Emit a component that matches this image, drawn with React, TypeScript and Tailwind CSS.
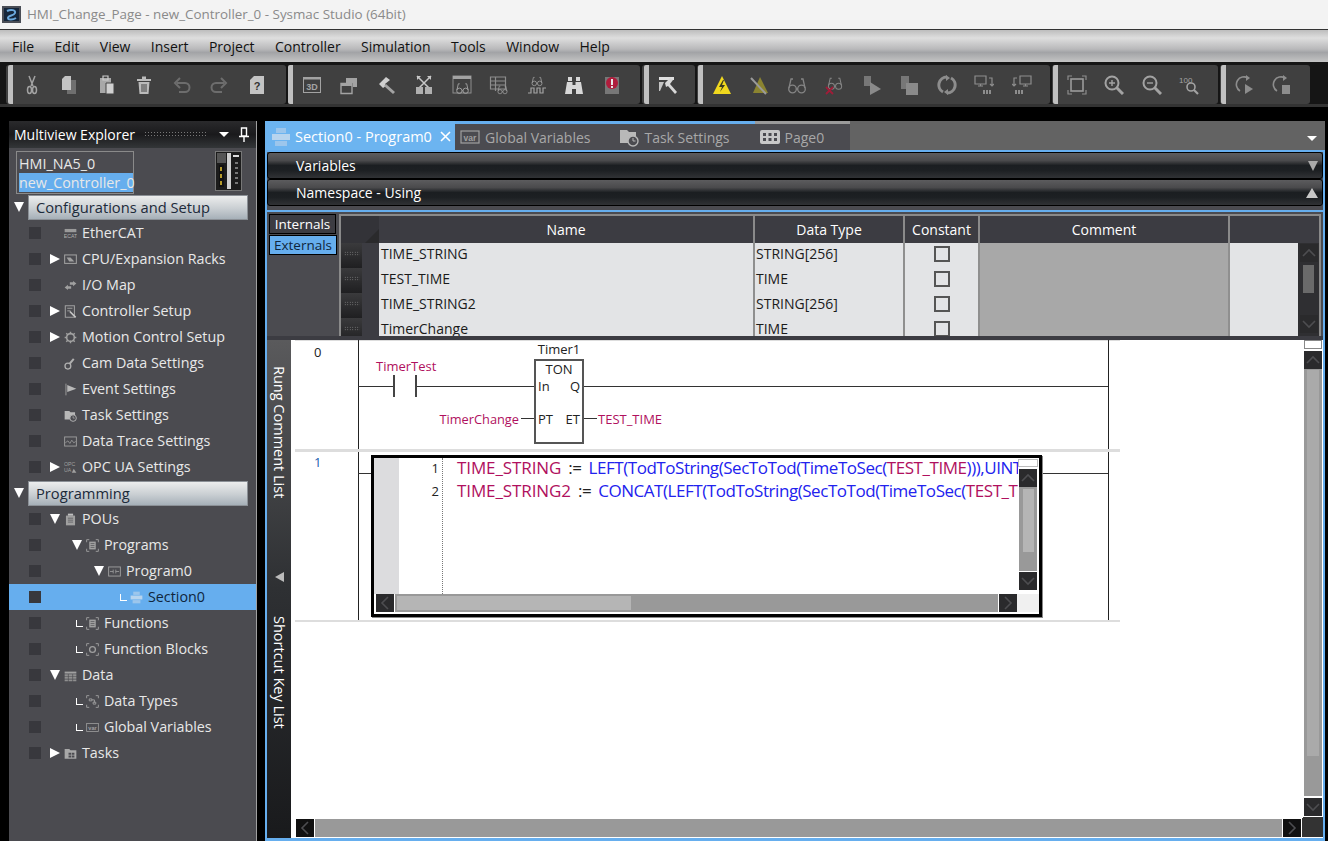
import type { ReactNode } from "react"

const FONT = "font-['Open_Sans','Liberation_Sans',sans-serif]"

function Ico({ children, size = 20 }: { children: ReactNode; size?: number }) {
  return (
    <svg width={size} height={size} viewBox="0 0 20 20" fill="#a3a3a3" stroke="none">
      {children}
    </svg>
  )
}

const line = { fill: "none", stroke: "#a3a3a3", strokeWidth: 1.5 }
const thin = { fill: "none", stroke: "#8d8d8d", strokeWidth: 1.2 }

function Glasses({ color = "#858585" }: { color?: string }) {
  return (
    <g fill="none" stroke={color} strokeWidth="1.3">
      <circle cx="5.5" cy="14" r="3.8" />
      <circle cx="14.5" cy="14" r="3.8" />
      <path d="M9.3 14h1.4M2 13l2-9h2M18 13l-2-9h-2" />
    </g>
  )
}

const TOOLBAR_ICONS: Record<string, ReactNode> = {
  cut: (
    <>
      <path d="M7 1l4 10M13 1L9 11" {...line} />
      <ellipse cx="7.5" cy="15" rx="2" ry="3.5" {...line} />
      <ellipse cx="12.5" cy="15" rx="2" ry="3.5" {...line} />
    </>
  ),
  copy: (
    <>
      <path d="M8 5h9v14H8z" fill="#6f6f6f" />
      <path d="M6 1h6v14H3V4z" fill="#c4c4c4" />
    </>
  ),
  paste: (
    <>
      <path d="M3 3h11v15H3z" fill="#a8a8a8" />
      <path d="M6 1h5v4H6z" fill="none" stroke="#ccc" strokeWidth="1.2" />
      <path d="M9 8h8v11H9z" fill="#d0d0d0" stroke="#444" />
    </>
  ),
  trash: (
    <>
      <path d="M3 4h14v2H3zM8 1.5h4V4H8z" fill="#bbb" />
      <path d="M4.5 7h11l-1 12h-9z" fill="#bbb" />
      <path d="M8 9v8M10 9v8M12 9v8" stroke="#444" strokeWidth="1" />
    </>
  ),
  undo: <path d="M5 8h8a4 4 0 0 1 0 9H7M8 3L3 8l5 5" fill="none" stroke="#6d6d6d" strokeWidth="2" />,
  redo: <path d="M15 8H7a4 4 0 0 0 0 9h6M12 3l5 5-5 5" fill="none" stroke="#6d6d6d" strokeWidth="2" />,
  help: (
    <>
      <path d="M7 1h10v18H3V5z" fill="#c4c4c4" />
      <text x="10" y="15" fontSize="11" fontWeight="700" textAnchor="middle" fill="#333" fontFamily="Liberation Sans">?</text>
    </>
  ),
  d3: (
    <>
      <rect x="1.5" y="2.5" width="17" height="15" fill="none" stroke="#a3a3a3" strokeWidth="1" />
      <rect x="1.5" y="2.5" width="17" height="2" fill="#a3a3a3" />
      <text x="10" y="14.5" fontSize="9" fontWeight="700" textAnchor="middle" fill="#a3a3a3" fontFamily="Liberation Sans">3D</text>
    </>
  ),
  windows: (
    <>
      <path d="M7 3h11v9h-4V8H7z" fill="#a3a3a3" />
      <path d="M2 8.5h11v10H2z" fill="none" stroke="#a3a3a3" strokeWidth="1.4" />
      <path d="M2 8h11v3H2z" fill="#a3a3a3" />
    </>
  ),
  hammer: (
    <>
      <path d="M2 9l7-7 4 3-5 4 1 2-3 2z" fill="#cfcfcf" />
      <path d="M9 9l9 8-2 2-9-8z" fill="#a3a3a3" />
    </>
  ),
  cross: (
    <>
      <path d="M3 1l14 14M17 1L3 15" fill="none" stroke="#c8c8c8" strokeWidth="1.5" />
      <path d="M3 1h4L3 5zM17 1h-4l4 4z" fill="#c8c8c8" />
      <path d="M2 12h7v7H2zM11 12h7v7h-7z" fill="#b0b0b0" />
    </>
  ),
  watch: (
    <>
      <rect x="1" y="1" width="18" height="17" fill="none" stroke="#8d8d8d" />
      <rect x="1" y="1" width="18" height="3" fill="#a3a3a3" />
      <g transform="translate(3.5 6) scale(.7)"><Glasses color="#a3a3a3" /></g>
    </>
  ),
  tableWatch: (
    <>
      <path d="M1.5 2h15v12h-15zM1.5 6h15M1.5 10h15M6.5 2v14" {...thin} />
      <g transform="translate(8 9) scale(.55)"><Glasses color="#a3a3a3" /></g>
    </>
  ),
  trace: (
    <>
      <g transform="translate(4 0) scale(.6)"><Glasses color="#a3a3a3" /></g>
      <path d="M1 18h3v-5h3v5h3v-5h3v5h3v-5h3" fill="none" stroke="#a3a3a3" strokeWidth="1.2" />
    </>
  ),
  binoculars: (
    <>
      <path d="M4 2h4v4H4zM12 2h4v4h-4z" fill="#d8d8d8" />
      <path d="M3 7h5.5v3h3V7H17l2 12h-7v-5H8v5H1z" fill="#d8d8d8" />
    </>
  ),
  alert: (
    <>
      <path d="M3 2h14v17H3z" fill="#777" />
      <circle cx="10" cy="8" r="6" fill="#b01c3c" />
      <path d="M9 4h2v6H9zM9 11h2v2H9z" fill="#e8e8e8" />
    </>
  ),
  build: (
    <>
      <path d="M1 2h15v3H1z" fill="#e0e0e0" />
      <path d="M1 7h5l-4 9H1z" fill="#c4c4c4" />
      <path d="M7 8l5-5 3 2-3 4 7 8-2 2-7-8-2 1z" fill="#d8d8d8" />
    </>
  ),
  warn: (
    <>
      <path d="M10 1l9 18H1z" fill="#f0d81e" />
      <path d="M11 5l-4 7h3l-2 5 5-7h-3l2-5z" fill="#3a3a20" />
    </>
  ),
  warnOff: (
    <>
      <path d="M11 2l8 16H4z" fill="#8b8430" />
      <path d="M2 3l15 16" stroke="#9a9a9a" strokeWidth="2" />
    </>
  ),
  glasses: <Glasses />,
  glassesX: (
    <>
      <g transform="translate(3 0) scale(.8)"><Glasses color="#858585" /></g>
      <path d="M2 12l7 7M9 12l-7 7" stroke="#a01c38" strokeWidth="1.8" />
    </>
  ),
  run: (
    <>
      <path d="M2 1h7v10H2z" fill="#777" />
      <path d="M8 7l11 7-11 6z" fill="#8a8a8a" />
    </>
  ),
  stop: (
    <>
      <path d="M2 1h8v13H2z" fill="#777" />
      <path d="M7 8h12v12H7z" fill="#8a8a8a" />
    </>
  ),
  cycle: (
    <>
      <path d="M10 2a8 8 0 0 0-4 15M10 18a8 8 0 0 0 4-15" fill="none" stroke="#8d8d8d" strokeWidth="3" />
      <path d="M9 0l4 3-4 3zM11 14l-4 3 4 3z" fill="#8d8d8d" />
    </>
  ),
  upload: (
    <>
      <path d="M1 1h11v8H1zM4 11h5M6.5 9v2" {...thin} />
      <path d="M15 3h3v8M16 9l2 2 2-2" {...thin} />
      <path d="M9 15h2v4H9zM12 15h2v4h-2zM15 15h2v4h-2z" fill="#8d8d8d" />
    </>
  ),
  download: (
    <>
      <path d="M8 1h11v8H8zM11 11h5M13.5 9v2" {...thin} />
      <path d="M5 3H2v8M0 9l2 2 2-2" {...thin} />
      <path d="M3 15h2v4H3zM6 15h2v4H6zM9 15h2v4H9z" fill="#8d8d8d" />
    </>
  ),
  fit: (
    <>
      <path d="M1 5V1h4M15 1h4v4M19 15v4h-4M5 19H1v-4" {...thin} />
      <rect x="4" y="4" width="12" height="12" fill="none" stroke="#9a9a9a" strokeWidth="1.6" />
    </>
  ),
  zoomIn: (
    <>
      <circle cx="8" cy="8" r="6.5" fill="none" stroke="#a3a3a3" strokeWidth="2" />
      <path d="M12.5 12.5L19 19" stroke="#a3a3a3" strokeWidth="3" />
      <path d="M5 8h6M8 5v6" stroke="#a3a3a3" strokeWidth="1.4" />
    </>
  ),
  zoomOut: (
    <>
      <circle cx="8" cy="8" r="6.5" fill="none" stroke="#a3a3a3" strokeWidth="2" />
      <path d="M12.5 12.5L19 19" stroke="#a3a3a3" strokeWidth="3" />
      <path d="M5 8h6" stroke="#a3a3a3" strokeWidth="1.4" />
    </>
  ),
  zoom100: (
    <>
      <circle cx="12" cy="12" r="4" fill="none" stroke="#a3a3a3" strokeWidth="1.6" />
      <path d="M15 15l4 4" stroke="#a3a3a3" strokeWidth="2.2" />
      <text x="0" y="8" fontSize="8" fill="#a3a3a3" fontFamily="Liberation Sans">100</text>
    </>
  ),
  stepRun: (
    <>
      <path d="M13 3a7 7 0 1 0-8 13" fill="none" stroke="#8d8d8d" strokeWidth="1.6" />
      <path d="M11 0l4 3-4 3z" fill="#8d8d8d" />
      <path d="M10 9l8 5-8 5z" fill="#8d8d8d" />
    </>
  ),
  stepStop: (
    <>
      <path d="M13 3a7 7 0 1 0-8 13" fill="none" stroke="#8d8d8d" strokeWidth="1.6" />
      <path d="M11 0l4 3-4 3z" fill="#8d8d8d" />
      <path d="M10 10h8v9h-8z" fill="#8d8d8d" />
    </>
  ),
}

const TOOLBAR_GROUPS = [
  { w: "w-[280px] pl-[2px]", icons: ["cut", "copy", "paste", "trash", "undo", "redo", "help"] },
  { w: "w-[352px]", icons: ["d3", "windows", "hammer", "cross", "watch", "tableWatch", "trace", "binoculars", "alert"] },
  { w: "w-[53px] pl-[2px]", icons: ["build"] },
  { w: "w-[353px] pl-[1px]", icons: ["warn", "warnOff", "glasses", "glassesX", "run", "stop", "cycle", "upload", "download"] },
  { w: "w-[166px] pl-[1px]", icons: ["fit", "zoomIn", "zoomOut", "zoom100"] },
  { w: "w-[90px] pl-[1px]", icons: ["stepRun", "stepStop"] },
]

const TREE_ICONS: Record<string, ReactNode> = {
  ethercat: (
    <>
      <path d="M1 3h18v5H1z" fill="#9a9a9a" />
      <text x="10" y="17" fontSize="8" textAnchor="middle" fill="#b0b0b0" fontFamily="Liberation Sans">ECAT</text>
    </>
  ),
  racks: (
    <>
      <rect x="1" y="3" width="18" height="13" fill="none" stroke="#a0a0a0" strokeWidth="1.6" />
      <path d="M4 7h6l6 6H8z" fill="#a0a0a0" />
    </>
  ),
  io: <path d="M1 13l5-4v2h5v4H6v2zM19 7l-5-4v2H9v4h5v2z" fill="#a0a0a0" />,
  setup: (
    <>
      <path d="M2 1h14v18H2z" fill="none" stroke="#a0a0a0" strokeWidth="1.6" />
      <path d="M5 5h8M5 9h5" stroke="#a0a0a0" strokeWidth="1.5" />
      <path d="M9 10l9 9" stroke="#c8c8c8" strokeWidth="2.4" />
    </>
  ),
  gear: (
    <>
      <circle cx="10" cy="10" r="6" fill="none" stroke="#a0a0a0" strokeWidth="2.4" />
      <path d="M10 1v4M10 15v4M1 10h4M15 10h4M3.5 3.5l3 3M13.5 13.5l3 3M16.5 3.5l-3 3M6.5 13.5l-3 3" stroke="#a0a0a0" strokeWidth="2.2" />
    </>
  ),
  cam: (
    <>
      <circle cx="6" cy="14" r="4.5" fill="none" stroke="#b0b0b0" strokeWidth="2" />
      <path d="M9 10l6-7" stroke="#b0b0b0" strokeWidth="3" />
    </>
  ),
  flag: (
    <>
      <path d="M3 1v18" stroke="#a0a0a0" strokeWidth="1.4" />
      <path d="M5 3l14 6-14 5z" fill="#b8b8b8" />
    </>
  ),
  task: (
    <>
      <path d="M1 3h7l2 2h7v11H1z" fill="#b8b8b8" />
      <circle cx="14" cy="14" r="5" fill="#4b4b50" stroke="#b8b8b8" strokeWidth="1.4" />
      <path d="M14 11v3h2.5" stroke="#b8b8b8" fill="none" />
    </>
  ),
  trace: (
    <>
      <rect x="1" y="3" width="18" height="14" fill="none" stroke="#a0a0a0" strokeWidth="1.4" />
      <path d="M2 12l4-3 3 4 3-5 3 4 3-2" fill="none" stroke="#a0a0a0" strokeWidth="1.2" />
    </>
  ),
  opc: (
    <>
      <text x="0" y="8" fontSize="8" fill="#a0a0a0" fontFamily="Liberation Sans">OPC</text>
      <text x="0" y="17" fontSize="8" fill="#a0a0a0" fontFamily="Liberation Sans">UA</text>
      <path d="M12 18l3-6 4 6z" fill="#a0a0a0" />
    </>
  ),
  pou: (
    <>
      <path d="M3 4h14v15H3z" fill="#a0a0a0" />
      <path d="M6 1h8v3H6z" fill="#c0c0c0" />
      <path d="M6 8h8M6 11h8M6 14h8" stroke="#4b4b50" />
    </>
  ),
  bracket: (
    <>
      <path d="M1 5V1h4M15 1h4v4M19 15v4h-4M5 19H1v-4" fill="none" stroke="#a0a0a0" strokeWidth="1.4" />
      <path d="M5 4h10v12H5z" fill="#a0a0a0" />
      <path d="M7 7h6M7 10h6M7 13h6" stroke="#4b4b50" />
    </>
  ),
  program: (
    <>
      <rect x="1" y="3" width="18" height="14" fill="none" stroke="#a0a0a0" strokeWidth="1.4" />
      <path d="M3 10h5M12 10h5M8 7v6M12 7v6" stroke="#a0a0a0" strokeWidth="1.2" />
    </>
  ),
  section: (
    <>
      <path d="M5 1h10v5H5z" fill="#9cc6ec" />
      <path d="M1 7h18v6H1z" fill="#b7d4ee" />
      <path d="M4 14h12v5H4z" fill="#9cc6ec" />
    </>
  ),
  fb: (
    <>
      <path d="M1 5V1h4M15 1h4v4M19 15v4h-4M5 19H1v-4" fill="none" stroke="#a0a0a0" strokeWidth="1.4" />
      <circle cx="10" cy="10" r="4.5" fill="none" stroke="#a0a0a0" strokeWidth="2" />
    </>
  ),
  table: (
    <>
      <path d="M1 4h18v3H1z" fill="#a0a0a0" />
      <path d="M1 8h5v3H1zM7 8h6v3H7zM14 8h5v3h-5zM1 12h5v3H1zM7 12h6v3H7zM14 12h5v3h-5zM1 16h5v3H1zM7 16h6v3H7zM14 16h5v3h-5z" fill="#8f8f8f" />
    </>
  ),
  types: (
    <>
      <path d="M1 5V1h4M15 1h4v4M19 15v4h-4M5 19H1v-4" fill="none" stroke="#a0a0a0" strokeWidth="1.4" />
      <path d="M5 6h4v3H5zM11 11h4v3h-4zM9 7.5h4v4" fill="none" stroke="#a0a0a0" strokeWidth="1.4" />
    </>
  ),
  vars: (
    <>
      <rect x="1" y="4" width="18" height="12" fill="none" stroke="#a0a0a0" strokeWidth="1.2" />
      <text x="10" y="13.5" fontSize="8.5" textAnchor="middle" fontWeight="700" fill="#a0a0a0" fontFamily="Liberation Sans">var</text>
    </>
  ),
  tasks: (
    <>
      <path d="M1 3h7l2 2h9v13H1z" fill="#a8a8a8" />
      <path d="M7 9h4v3H7zM12 9h4v3h-4zM7 13h4v3H7zM12 13h4v3h-4z" fill="#4b4b50" />
    </>
  ),
  page: (
    <>
      <rect x="0" y="3" width="20" height="14" rx="2" fill="#c8c8c8" />
      <path d="M3 6h3v3H3zM8.5 6h3v3h-3zM14 6h3v3h-3zM3 11h3v3H3zM8.5 11h3v3h-3zM14 11h3v3h-3z" fill="#4b4b50" />
    </>
  ),
}

type TreeRow = {
  label: string
  icon?: string
  depth?: 1 | 2 | 3 | 4
  arrow?: "right" | "down"
  ell?: boolean
  selected?: boolean
  heading?: boolean
}

const TREE: TreeRow[] = [
  { label: "Configurations and Setup", heading: true },
  { label: "EtherCAT", icon: "ethercat", depth: 1 },
  { label: "CPU/Expansion Racks", icon: "racks", depth: 1, arrow: "right" },
  { label: "I/O Map", icon: "io", depth: 1 },
  { label: "Controller Setup", icon: "setup", depth: 1, arrow: "right" },
  { label: "Motion Control Setup", icon: "gear", depth: 1, arrow: "right" },
  { label: "Cam Data Settings", icon: "cam", depth: 1 },
  { label: "Event Settings", icon: "flag", depth: 1 },
  { label: "Task Settings", icon: "task", depth: 1 },
  { label: "Data Trace Settings", icon: "trace", depth: 1 },
  { label: "OPC UA Settings", icon: "opc", depth: 1, arrow: "right" },
  { label: "Programming", heading: true },
  { label: "POUs", icon: "pou", depth: 1, arrow: "down" },
  { label: "Programs", icon: "bracket", depth: 2, arrow: "down" },
  { label: "Program0", icon: "program", depth: 3, arrow: "down" },
  { label: "Section0", icon: "section", depth: 4, ell: true, selected: true },
  { label: "Functions", icon: "bracket", depth: 2, ell: true },
  { label: "Function Blocks", icon: "fb", depth: 2, ell: true },
  { label: "Data", icon: "table", depth: 1, arrow: "down" },
  { label: "Data Types", icon: "types", depth: 2, ell: true },
  { label: "Global Variables", icon: "vars", depth: 2, ell: true },
  { label: "Tasks", icon: "tasks", depth: 1, arrow: "right" },
]

const DEPTH_WIDTH = { 1: "w-[23px]", 2: "w-[45px]", 3: "w-[67px]", 4: "w-[89px]" }

function Triangle({ dir, className = "" }: { dir: "right" | "down" | "up"; className?: string }) {
  if (dir === "right") return <span className={`h-0 w-0 border-y-[5px] border-l-[10px] border-y-transparent border-l-white ${className}`} />
  if (dir === "up") return <span className={`h-0 w-0 border-x-[6px] border-b-[10px] border-x-transparent border-b-[#c8c8c8] ${className}`} />
  return <span className={`h-0 w-0 border-x-[5px] border-t-[10px] border-x-transparent border-t-white ${className}`} />
}

function Row({ row }: { row: TreeRow }) {
  if (row.heading) {
    return (
      <div className="flex h-[26px] items-center">
        <Triangle dir="down" className="ml-[5px]" />
        <div className="ml-[4px] flex h-[25px] w-[220px] items-center border border-[#8b9096] bg-[linear-gradient(#eceded,#c9ced2_55%,#a6b0b8)] pl-[7px] text-[14.7px] text-[#1c2a3a]">
          {row.label}
        </div>
      </div>
    )
  }
  return (
    <div className={`flex h-[26px] items-center text-[14.3px] ${row.selected ? "bg-[#66aeee] text-[#10263c]" : "text-[#e8e8e8]"}`}>
      <span className="ml-[20px] h-[12px] w-[12px] shrink-0 bg-[#38383d]" />
      <div className={`relative flex shrink-0 items-center justify-end ${DEPTH_WIDTH[row.depth ?? 1]}`}>
        {row.arrow && <Triangle dir={row.arrow} className="mr-[4px]" />}
        {row.ell && <span className="mr-[3px] h-[7px] w-[7px] border-b border-l border-white" />}
      </div>
      <span className="flex w-[18px] shrink-0 items-center">
        <Ico size={13}>{TREE_ICONS[row.icon ?? ""]}</Ico>
      </span>
      <span className="whitespace-nowrap">{row.label}</span>
    </div>
  )
}

function ScrollBtn({ dir, className = "" }: { dir: "up" | "down" | "left" | "right"; className?: string }) {
  const d = { up: "M3 12l6-6 6 6", down: "M3 6l6 6 6-6", left: "M12 3L6 9l6 6", right: "M6 3l6 6-6 6" }[dir]
  return (
    <div className={`flex h-[18px] w-[18px] shrink-0 items-center justify-center bg-[#2a2a2c] ${className}`}>
      <svg width="18" height="18" viewBox="0 0 18 18" fill="none" stroke="#4d4d50" strokeWidth="1.6">
        <path d={d} />
      </svg>
    </div>
  )
}

const VARS = [
  { name: "TIME_STRING", type: "STRING[256]" },
  { name: "TEST_TIME", type: "TIME" },
  { name: "TIME_STRING2", type: "STRING[256]" },
  { name: "TimerChange", type: "TIME" },
]

const BAR = "relative flex h-[27px] shrink-0 items-center rounded-[3px] border border-black bg-[linear-gradient(#5c5c5e,#4a4a4c_30%,#1b1e21_50%,#1d2023_70%,#303235)] pl-[28px] text-white"

function VarTable() {
  return (
    <div className="flex h-[126px] shrink-0 overflow-hidden border-t-2 border-[#66aeee] bg-[#4b4b50]">
      <div className="w-[72px] shrink-0 pl-[2px] pt-[2px] text-[13.5px]">
        <div className="mr-[3px] flex h-[20px] items-center justify-center border border-black bg-[#3c3c42] text-white">Internals</div>
        <div className="mr-[2px] mt-px flex h-[20px] items-center justify-center border border-black bg-[#66aeee] text-[#10263c]">Externals</div>
      </div>
      <div className="mt-[2px] flex w-[982px] flex-col overflow-hidden border-x-2 border-t-2 border-[#8a8a8a] bg-[#3c3c42]">
        <div className="grid h-[27px] shrink-0 grid-cols-[38px_374px_150px_75px_250px_1fr] items-center text-center text-white">
          <span className="relative h-full bg-[#333338]">
            <span className="absolute bottom-0 right-0 h-0 w-0 border-b-[14px] border-l-[14px] border-b-[#2a2a2c] border-l-transparent" />
          </span>
          <span>Name</span>
          <span className="flex h-full items-center justify-center border-l-2 border-[#8a8a8a]">Data Type</span>
          <span className="flex h-full items-center justify-center border-l-2 border-[#8a8a8a]">Constant</span>
          <span className="flex h-full items-center justify-center border-l-2 border-[#8a8a8a]">Comment</span>
          <span className="h-full border-l-2 border-[#8a8a8a]" />
        </div>
        <div className="flex min-h-0 flex-1">
          <div className="flex-1">
            {VARS.map((v) => (
              <div key={v.name} className="grid h-[25px] grid-cols-[38px_374px_150px_75px_250px_1fr] border-b-2 border-[#8f8f8f] text-[#1a1a1a]">
                <span className="flex h-[25px]">
                  <span className="flex w-[21px] items-start justify-center bg-[linear-gradient(#3a3a3c,#1f1f21)] pt-[8px]">
                    <span className="h-[5px] w-[16px] bg-[radial-gradient(#8a8a8a_0.7px,transparent_0.7px)] bg-[length:2.5px_2.5px]" />
                  </span>
                  <span className="flex-1 bg-[#3c3c42]" />
                </span>
                <span className="bg-[#e3e4e6] pl-[2px] leading-[22px]">{v.name}</span>
                <span className="border-l-2 border-[#8f8f8f] bg-[#e3e4e6] pl-[1px] leading-[22px]">{v.type}</span>
                <span className="flex justify-center border-l-2 border-[#8f8f8f] bg-[#e3e4e6] pt-[3px]">
                  <span className="h-[16px] w-[16px] border-2 border-[#555] bg-[#e3e4e6]" />
                </span>
                <span className="border-l-2 border-[#8f8f8f] bg-[#a8a8a8]" />
                <span className="border-l-2 border-[#8f8f8f] bg-[#e3e4e6]" />
              </div>
            ))}
          </div>
          <div className="flex w-[21px] shrink-0 flex-col items-center bg-[#2f2f32] pt-px">
            <ScrollBtn dir="up" />
            <div className="mt-[3px] h-[28px] w-[11px] bg-[#6a6a6a]" />
            <div className="flex-1" />
            <ScrollBtn dir="down" className="mb-[3px]" />
          </div>
        </div>
      </div>
    </div>
  )
}

function Ladder() {
  const wire = "absolute bg-[#333]"
  const red = "absolute whitespace-nowrap text-[#b0105e] text-[13px] leading-none"
  const pin = "absolute text-[13px] leading-none text-[#222]"
  return (
    <div className="relative min-h-0 flex-1 overflow-hidden bg-white">
      <div className="absolute left-[4px] top-0 h-px w-[825px] bg-[#ddd]" />
      <div className="absolute left-[67px] top-0 h-[280px] w-px bg-[#222]" />
      <div className="absolute left-[817px] top-0 h-[280px] w-px bg-[#222]" />
      <div className="absolute left-[4px] top-[109px] h-[3px] w-[825px] bg-[#ddd]" />
      <div className="absolute left-[4px] top-[280px] h-[2px] w-[825px] bg-[#ddd]" />

      <span className="absolute left-[23px] top-[4px] text-[13px] leading-[16px] text-[#222]">0</span>
      <span className="absolute left-[23px] top-[114px] text-[13px] leading-[16px] text-[#2060b0]">1</span>

      <span className={`${red} left-[85px] top-[20px]`}>TimerTest</span>
      <div className={`${wire} left-[67px] top-[46px] h-px w-[35px]`} />
      <div className="absolute left-[102px] top-[35px] h-[22px] w-[2px] bg-[#444]" />
      <div className="absolute left-[124px] top-[35px] h-[22px] w-[2px] bg-[#444]" />
      <div className={`${wire} left-[126px] top-[46px] h-px w-[117px]`} />
      <span className="absolute left-[243px] top-[2px] w-[50px] text-center text-[13px] leading-[14px] text-[#222]">Timer1</span>
      <div className="absolute left-[243px] top-[19px] h-[85px] w-[50px] border-2 border-[#555] bg-white">
        <span className="absolute inset-x-0 top-0 text-center text-[13px] leading-[16px] text-[#222]">TON</span>
        <span className={`${pin} left-[2px] top-[19px]`}>In</span>
        <span className={`${pin} right-[2px] top-[19px]`}>Q</span>
        <span className={`${pin} left-[2px] top-[52px]`}>PT</span>
        <span className={`${pin} right-[2px] top-[52px]`}>ET</span>
      </div>
      <div className={`${wire} left-[293px] top-[46px] h-px w-[524px]`} />
      <span className={`${red} right-[784px] top-[73px] !text-[12.8px]`}>TimerChange</span>
      <div className={`${wire} left-[230px] top-[78px] h-px w-[13px]`} />
      <div className={`${wire} left-[293px] top-[78px] h-px w-[13px]`} />
      <span className={`${red} left-[307px] top-[73px]`}>TEST_TIME</span>

      <div className={`${wire} left-[67px] top-[133px] h-px w-[14px]`} />
      <div className={`${wire} left-[750px] top-[133px] h-px w-[67px]`} />

      <div className="absolute left-[80px] top-[115px] flex h-[162px] w-[671px] flex-col border-[3px] border-black bg-white shadow-[1px_1px_0_#888]">
        <div className="flex min-h-0 flex-1">
          <div className="w-[25px] shrink-0 bg-[#dcdcde]" />
          <div className="w-[44px] shrink-0 border-r border-dotted border-[#777] pr-[3px] text-right text-[13px] leading-[23px] text-[#222]">
            <div className="-mt-[1px]">1</div>
            <div>2</div>
          </div>
          <div className="relative min-w-0 flex-1 overflow-hidden pl-[14px] text-[17px] leading-[23px]">
            <div className="-mt-[2px] whitespace-nowrap tracking-[-0.45px] text-[#2222ee] [word-spacing:3px]">
              <span className="tracking-[-0.1px] text-[#b0105e]">TIME_STRING</span> <span className="text-[#222]">:=</span> LEFT(TodToString(SecToTod(TimeToSec(<span className="text-[#b0105e]">TEST_TIME</span>))),UINT#8)
            </div>
            <div className="whitespace-nowrap tracking-[-0.45px] text-[#2222ee] [word-spacing:3px]">
              <span className="tracking-[-0.1px] text-[#b0105e]">TIME_STRING2</span> <span className="text-[#222]">:=</span> CONCAT(LEFT(TodToString(SecToTod(TimeToSec(<span className="text-[#b0105e]">TEST_TIME</span>
            </div>
          </div>
          <div className="flex w-[21px] shrink-0 flex-col items-start bg-white pt-[1px]">
            <div className="h-[8px] w-[20px] border border-[#bbb] bg-white" />
            <ScrollBtn dir="up" className="ml-px mt-[2px]" />
            <div className="ml-px flex h-[84px] w-[18px] justify-center bg-[#999] pt-[2px]">
              <div className="h-[63px] w-[11px] bg-[#b5b5b5]" />
            </div>
            <ScrollBtn dir="down" className="ml-px mt-px" />
          </div>
        </div>
        <div className="mb-[2px] flex h-[18px] shrink-0 pl-[2px]">
          <ScrollBtn dir="left" />
          <div className="ml-px flex-1 bg-[#999] pl-[2px] pt-[2px]">
            <div className="h-[14px] w-[234px] bg-[#b5b5b5]" />
          </div>
          <ScrollBtn dir="right" className="ml-px" />
          <div className="w-[22px] bg-[#f0f0f0]" />
        </div>
      </div>
    </div>
  )
}

function SideTabs() {
  return (
    <div className="flex w-[24px] shrink-0 flex-col items-center bg-[linear-gradient(#5a5a5c,#2e3033_50%,#191a1c)] text-[14.5px] text-white">
      <div className="mt-[26px] whitespace-nowrap [writing-mode:vertical-rl]">Rung Comment List</div>
      <span className="mt-[74px] h-0 w-0 border-y-[5px] border-r-[9px] border-y-transparent border-r-[#bbb]" />
      <div className="mt-[34px] whitespace-nowrap [writing-mode:vertical-rl]">Shortcut Key List</div>
    </div>
  )
}

export default function App() {
  return (
    <div className={`flex h-[841px] w-[1328px] flex-col overflow-hidden bg-black text-[14px] ${FONT}`}>
      <div className="flex h-[30px] shrink-0 items-center border-b border-[#333] bg-[#f3f3f3] pl-[2px] text-[13.4px] text-[#8a8a8a]">
        <svg width="19" height="17" viewBox="0 0 19 17">
          <rect width="19" height="17" fill="#4a4e56" />
          <rect x="2" y="2" width="15" height="13" fill="#15263a" />
          <path d="M5 5c4-2 9-1 8 2s-7 2-7 5c0 2 5 2 8 0" fill="none" stroke="#6aa8dc" strokeWidth="2" />
        </svg>
        <span className="ml-[6px]">HMI_Change_Page - new_Controller_0 - Sysmac Studio (64bit)</span>
      </div>

      <div className="flex h-[32px] shrink-0 items-center gap-[20.4px] bg-[linear-gradient(#bdbdbd,#dedede_25%,#b8b8ba_60%,#a2a3a6_70%,#c4c4c4)] pl-[12px] pt-px text-[#111]">
        {["File", "Edit", "View", "Insert", "Project", "Controller", "Simulation", "Tools", "Window", "Help"].map((m) => (
          <span key={m}>{m}</span>
        ))}
      </div>

      <div className="flex h-[45px] shrink-0 items-start gap-[2px] border-b-[3px] border-[#333] bg-[#151515] pl-[6px] pt-[3px]">
        {TOOLBAR_GROUPS.map((g) => (
          <div key={g.icons[0]} className={`flex h-[39px] shrink-0 items-center rounded-[3px] bg-[#404040] ${g.w}`}>
            <span className="h-full w-[5px] shrink-0 rounded-l-[2px] bg-[#c0c0c0]" />
            {g.icons.map((name) => (
              <span key={name} className="flex w-[37.5px] shrink-0 justify-center">
                <Ico>{TOOLBAR_ICONS[name]}</Ico>
              </span>
            ))}
          </div>
        ))}
      </div>

      <div className="flex min-h-0 flex-1 pt-[14px]">
        <aside className="ml-[9px] flex w-[248px] shrink-0 flex-col border-r border-[#a0a0a0] bg-[#4b4b50]">
          <div className="flex h-[27px] shrink-0 items-center bg-[linear-gradient(#2a2a2c,#1a1a1c_50%,#333638)] pl-[5px] text-white">
            Multiview Explorer
            <span className="ml-[9px] h-[7px] w-[64px] bg-[radial-gradient(#777_1px,transparent_1px)] bg-[length:3px_3px]" />
            <span className="ml-[11px] h-0 w-0 border-x-[5px] border-t-[5px] border-x-transparent border-t-white" />
            <svg className="ml-[9px]" width="12" height="15" viewBox="0 0 12 15" fill="none" stroke="#fff" strokeWidth="1.4">
              <path d="M3.5 1h5v8h-5zM1 9.5h10M6 10v5" />
            </svg>
          </div>
          <div className="flex h-[46px] shrink-0 items-start pl-[7px] pt-[3px]">
            <div className="h-[43px] w-[118px] border border-[#8a8a8a] pl-[2px] pt-[2px] text-[14.3px] leading-[19px] text-[#e8e8e8]">
              <div>HMI_NA5_0</div>
              <div className="bg-[#66aeee] pr-[2px]">new_Controller_0</div>
            </div>
            <svg className="ml-[81px]" width="27" height="40" viewBox="0 0 27 40">
              <rect width="27" height="40" fill="#777" />
              <rect x="1" y="1" width="25" height="38" fill="#1c1c1c" />
              <rect x="2" y="2" width="9" height="10" fill="#555" />
              <rect x="4" y="14" width="5" height="22" fill="#111" />
              <path d="M5 16h2v4H5zM5 23h2v4H5zM5 30h2v4H5z" fill="#b59a2a" />
              <rect x="12" y="2" width="4" height="36" fill="#cfcfcf" />
              <path d="M18 4h6v2h-6z" fill="#ddd" />
              <path d="M20 11h3v2h-3zM20 16h3v2h-3zM20 21h3v2h-3zM20 26h3v2h-3zM20 31h3v2h-3z" fill="#777" />
            </svg>
          </div>
          {TREE.map((row) => (
            <Row key={row.label} row={row} />
          ))}
        </aside>

        <main className="ml-[8px] flex w-[1060px] shrink-0 flex-col border-x-2 border-b-[3px] border-[#66aeee] bg-[#4b4b50]">
          <div className="-mx-[2px] flex h-[31px] shrink-0 items-stretch border-b-2 border-[#66aeee] bg-[#636363] text-[#a8a8a8]">
            <div className="flex w-[190px] items-center bg-[#6cb4f0] pl-[6px] pt-[2px] text-[14.5px] text-white">
              <Ico>{TREE_ICONS.section}</Ico>
              <span className="ml-[4px]">Section0 - Program0</span>
              <svg className="ml-[8px]" width="11" height="11" viewBox="0 0 11 11" stroke="#fff" strokeWidth="1.6">
                <path d="M1 1l9 9M10 1l-9 9" />
              </svg>
            </div>
            <div className="flex w-[395px] flex-col bg-[#4b4b50]">
              <div className="h-[3px] shrink-0 bg-[linear-gradient(90deg,#66aeee_300px,#9a9a9a_300px)]" />
              <div className="flex flex-1 items-center pl-[5px]">
                <Ico>{TREE_ICONS.vars}</Ico>
                <span className="ml-[5px]">Global Variables</span>
                <span className="ml-[29px] flex"><Ico>{TREE_ICONS.task}</Ico></span>
                <span className="ml-[5px]">Task Settings</span>
                <span className="ml-[30px] flex"><Ico>{TREE_ICONS.page}</Ico></span>
                <span className="ml-[5px]">Page0</span>
              </div>
            </div>
            <div className="ml-auto mr-[8px] self-center pt-[6px]">
              <span className="block h-0 w-0 border-x-[5px] border-t-[5px] border-x-transparent border-t-white" />
            </div>
          </div>
          <div className={BAR}>
            Variables
            <Triangle dir="down" className="absolute right-[4px] !border-t-[#aaa]" />
          </div>
          <div className={BAR}>
            Namespace - Using
            <Triangle dir="up" className="absolute right-[4px]" />
          </div>
          <div className="h-[4px] shrink-0" />
          <VarTable />
          <div className="h-[4px] shrink-0 bg-[#3c3c42]" />
          <div className="flex min-h-0 flex-1">
            <SideTabs />
            <div className="flex min-w-0 flex-1 flex-col bg-white">
              <div className="flex min-h-0 flex-1">
                <Ladder />
                <div className="flex w-[20px] shrink-0 flex-col items-center bg-white">
                  <div className="h-[9px] w-[18px] border border-[#888]" />
                  <ScrollBtn dir="up" className="mt-[2px]" />
                  <div className="flex w-[18px] flex-1 justify-center bg-[#999] pt-px">
                    <div className="h-[386px] w-[12px] bg-[#aaa]" />
                  </div>
                  <ScrollBtn dir="down" className="my-[2px]" />
                </div>
              </div>
              <div className="flex h-[20px] shrink-0 bg-white pb-[1px] pl-[5px] pt-px">
                <ScrollBtn dir="left" className="!bg-[#111]" />
                <div className="ml-px flex-1 bg-[#999]" />
                <ScrollBtn dir="right" className="ml-px !bg-[#111]" />
                <div className="-mt-[2px] ml-px h-[20px] w-[21px] bg-[#333]" />
              </div>
            </div>
          </div>
        </main>
      </div>
    </div>
  )
}
